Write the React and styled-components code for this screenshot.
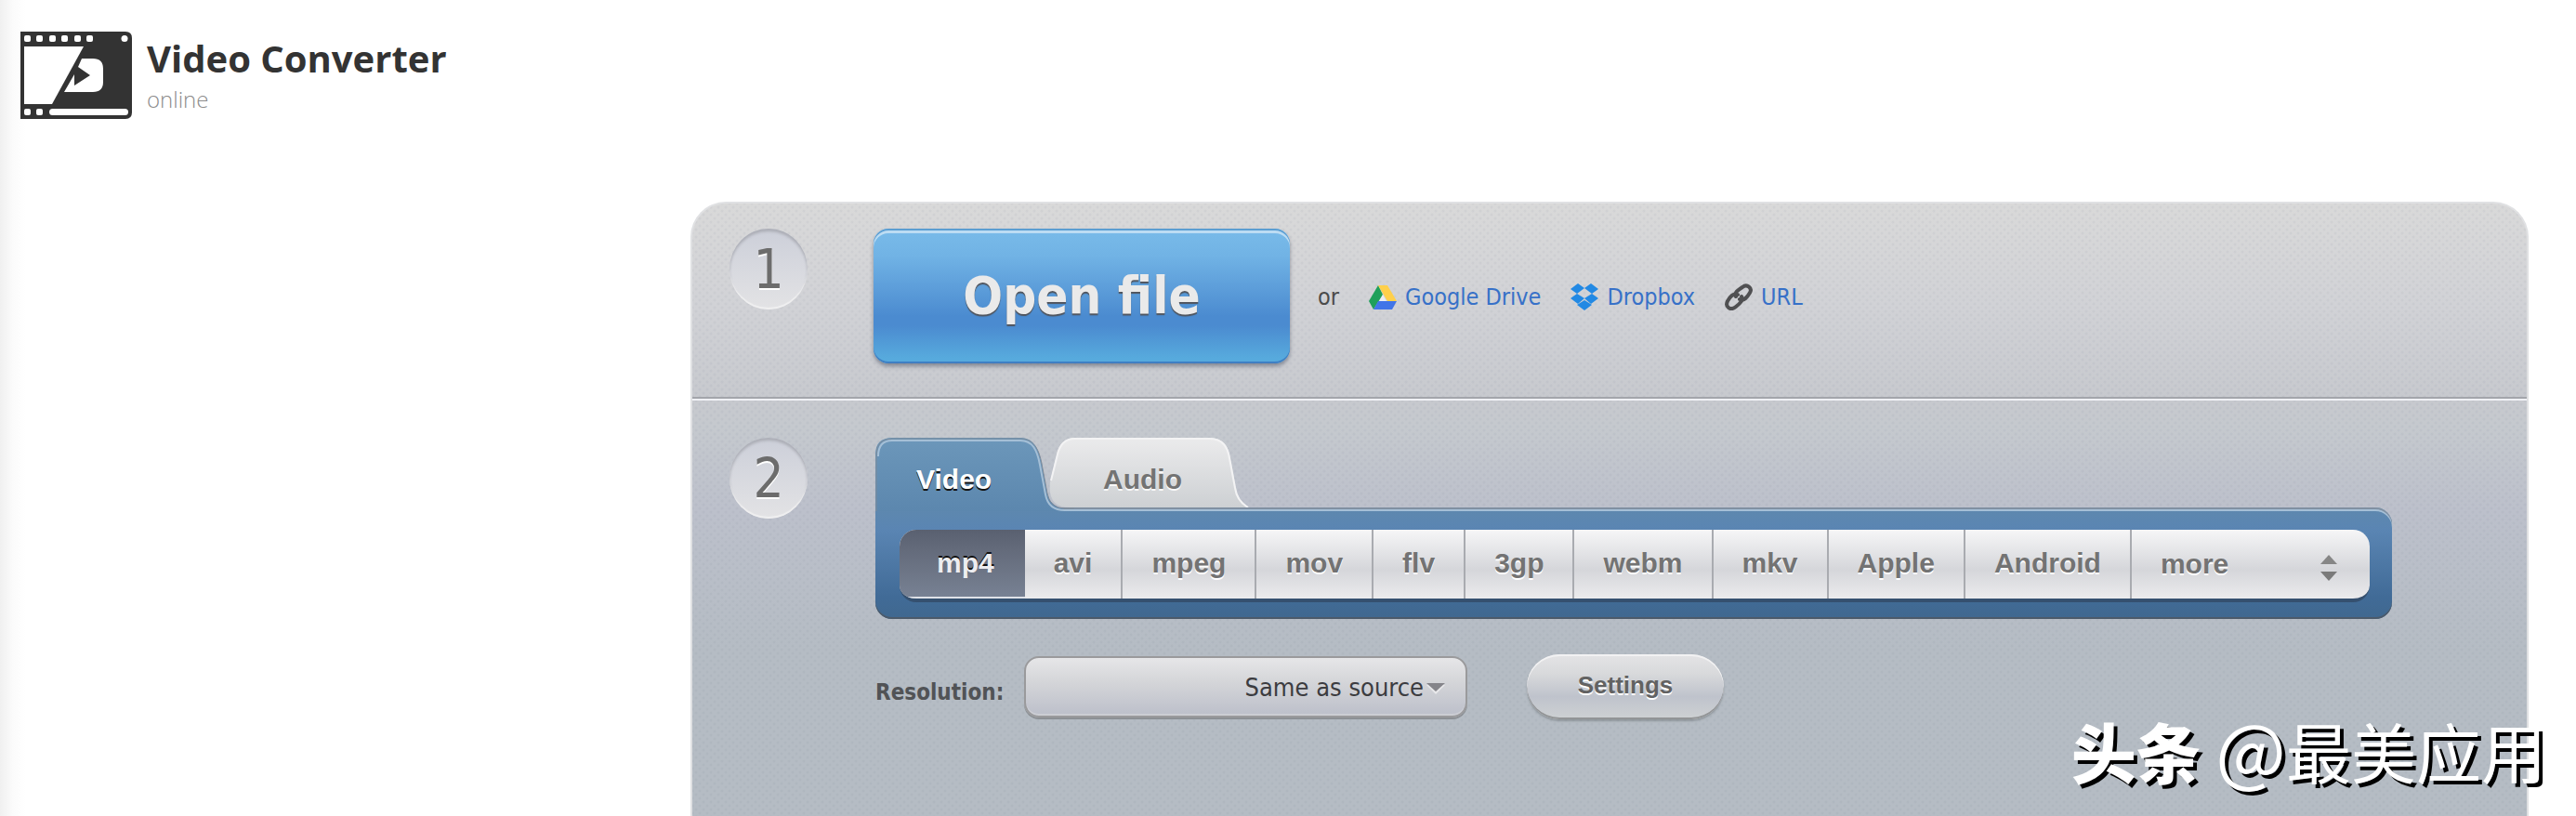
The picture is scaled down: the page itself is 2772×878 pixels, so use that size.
import React, { useState } from "react";
import styled, { createGlobalStyle } from "styled-components";

const formats = ["mp4", "avi", "mpeg", "mov", "flv", "3gp", "webm", "mkv", "Apple", "Android"];

const Logo = () => (
  <svg width="120" height="94" viewBox="0 0 120 94" aria-hidden="true">
    <path d="M0 0H113Q120 0 120 7V87Q120 94 113 94H0Z" fill="#333" />
    <g fill="#fff">
      {[4, 17, 31, 44, 58, 71].map((x) => (
        <rect key={x} x={x} y="4" width="7" height="7" rx="2" />
      ))}
      <circle cx="112" cy="7.5" r="3.5" />
      <path d="M4 16H68L34 78H4Z" />
      <path d="M66 29H78Q89 29 89 40V54Q89 65 78 65H47L58 46V58L75 47L62 38Z" />
      <rect x="4" y="83" width="7" height="7" rx="2" />
      <rect x="17" y="83" width="7" height="7" rx="2" />
      <rect x="31" y="83" width="85" height="7" rx="3.5" />
    </g>
  </svg>
);

const DriveIcon = () => (
  <svg width="30" height="26" viewBox="0 0 30 26" aria-hidden="true">
    <path d="M10 0L0 17L5 26L15 10Z" fill="#1fa05a" />
    <path d="M10 0H20L30 17H20Z" fill="#ffd04b" />
    <path d="M10 17H30L25 26H5Z" fill="#4175e8" />
    <path d="M15 10L11 17H19Z" fill="#eceef2" />
  </svg>
);

const DropboxIcon = () => (
  <svg width="30" height="29" viewBox="0 0 30 29" aria-hidden="true">
    <g fill="#2289e4">
      <path d="M8 0L15 5L7 11L0 6Z" />
      <path d="M22 0L15 5L23 11L30 6Z" />
      <path d="M0 16L7 11L15 16L8 22Z" />
      <path d="M30 16L23 11L15 16L22 22Z" />
      <path d="M15 18L23 23L15 29L7 23Z" />
    </g>
  </svg>
);

const LinkIcon = () => (
  <svg width="30" height="29" viewBox="0 0 30 29" aria-hidden="true">
    <g fill="none" stroke="#505052" strokeWidth="4" strokeLinecap="round">
      <path d="M12 14C10 10 13 8 19 4C24 0 30 5 27 10C24 15 21 19 16 17" />
      <path d="M18 14C20 18 17 21 12 25C6 30 0 25 3 19C6 14 9 10 14 12" />
    </g>
  </svg>
);

const VideoTabShape = () => (
  <svg width="214" height="79" viewBox="0 0 214 79" aria-hidden="true">
    <defs>
      <linearGradient id="videoTab" x1="0" y1="0" x2="0" y2="1">
        <stop offset="0" stopColor="#6c97ba" />
        <stop offset="1" stopColor="#5c87ae" />
      </linearGradient>
    </defs>
    <path d="M0 79V18Q0 0 18 0H156C170 0 176 11 179 28L185 60Q188 74 204 77L214 79Z" fill="url(#videoTab)" />
    <path d="M1 79V18Q1 1 18 1H156C170 1 176 12 179 28L185 60Q188 76 204 76H214" fill="none" stroke="#7f8b99" strokeWidth="1" />
    <path d="M3 20Q3 3 18 3H156C169 3 174 13 177 29L183 61Q186 78 204 78H214" fill="none" stroke="#a5bfd6" strokeWidth="2" />
  </svg>
);

const AudioTabShape = () => (
  <svg width="216" height="75" viewBox="0 0 216 75" aria-hidden="true">
    <defs>
      <linearGradient id="audioTab" x1="0" y1="0" x2="0" y2="1">
        <stop offset="0" stopColor="#ebebec" />
        <stop offset="1" stopColor="#cdd0d3" />
      </linearGradient>
    </defs>
    <path d="M1 48L8 18Q12 0 28 0H172C188 0 193 10 195 22L201 54Q203 68 215 75H22Q-2 75 1 48Z" fill="url(#audioTab)" />
    <path d="M2 46L9 18Q13 1 28 1H172C187 1 192 10 194 22L200 54Q202 68 214 75" fill="none" stroke="#f3f3f4" strokeWidth="2" />
  </svg>
);

const App = () => {
  const [tab, setTab] = useState("Video");
  const [format, setFormat] = useState("mp4");

  return (
    <>
      <GlobalStyle />
      <Page>
        <Header>
          <Logo />
          <div>
            <Title>Video Converter</Title>
            <Subtitle>online</Subtitle>
          </div>
        </Header>
        <Panel>
          <OpenStep>
            <StepNumber>1</StepNumber>
            <OpenButton type="button">Open file</OpenButton>
            <Sources>
              <span>or</span>
              <SourceLink href="#drive">
                <DriveIcon />
                Google Drive
              </SourceLink>
              <SourceLink href="#dropbox">
                <DropboxIcon />
                Dropbox
              </SourceLink>
              <SourceLink href="#url">
                <LinkIcon />
                URL
              </SourceLink>
            </Sources>
          </OpenStep>
          <FormatStep>
            <StepNumber>2</StepNumber>
            <FormatArea>
              <Tabs>
                <VideoTab type="button" onClick={() => setTab("Video")} aria-pressed={tab === "Video"}>
                  <VideoTabShape />
                  <TabText $light>Video</TabText>
                </VideoTab>
                <AudioTab type="button" onClick={() => setTab("Audio")} aria-pressed={tab === "Audio"}>
                  <AudioTabShape />
                  <TabText>Audio</TabText>
                </AudioTab>
              </Tabs>
              <FormatBox>
                <FormatBar>
                  {formats.map((item) => (
                    <FormatButton key={item} type="button" $active={item === format} onClick={() => setFormat(item)}>
                      {item}
                    </FormatButton>
                  ))}
                  <MoreField>
                    <MoreSelect aria-label="More formats">
                      <option>more</option>
                    </MoreSelect>
                    <svg width="20" height="28" viewBox="0 0 20 28" aria-hidden="true">
                      <path d="M10 0L19 10H1Z" fill="#868686" />
                      <path d="M1 18H19L10 28Z" fill="#7a7a7a" />
                    </svg>
                  </MoreField>
                </FormatBar>
              </FormatBox>
              <Options>
                <Label htmlFor="resolution">Resolution:</Label>
                <SelectField>
                  <ResolutionSelect id="resolution">
                    <option>Same as source</option>
                  </ResolutionSelect>
                  <svg width="20" height="12" viewBox="0 0 20 12" aria-hidden="true">
                    <path d="M0 2L10 12L20 2" fill="#e8e8ea" />
                    <path d="M0 0H20L10 9Z" fill="#85858a" />
                  </svg>
                </SelectField>
                <SettingsButton type="button">Settings</SettingsButton>
              </Options>
            </FormatArea>
          </FormatStep>
        </Panel>
        <Watermark>
          <b>头条</b> <span>@</span>最美应用
        </Watermark>
      </Page>
    </>
  );
};

const GlobalStyle = createGlobalStyle`
  * {
    box-sizing: border-box;
  }

  body {
    margin: 0;
    background: #fff;
    font-family: "DejaVu Sans Condensed", "Noto Sans", sans-serif;
  }

  button, select {
    margin: 0;
    padding: 0;
    border: 0;
    background: none;
    cursor: pointer;
  }

  svg {
    display: block;
    flex-shrink: 0;
  }
`;

const Page = styled.div`
  position: relative;
  display: flex;
  flex-direction: column;
  min-height: 100vh;
  background: linear-gradient(to right, #f0f0f0, #fbfbfb 14px, #fff 28px);
`;

const Header = styled.header`
  display: flex;
  gap: 16px;
  height: 217px;
  padding: 34px 22px 0;
  font-family: "Open Sans", sans-serif;
`;

const Title = styled.h1`
  margin: 0;
  color: #333;
  font-size: 40px;
  font-weight: 700;
  line-height: 58px;
`;

const Subtitle = styled.p`
  margin: 0;
  color: #8c8c8c;
  font-size: 24px;
  font-weight: 300;
  line-height: 30px;
`;

const Panel = styled.main`
  flex: 1;
  margin: 0 51px 0 743px;
  border: 2px solid #e0e1e3;
  border-bottom: 0;
  border-radius: 38px 38px 0 0;
  background:
    radial-gradient(circle, rgba(90, 100, 120, 0.06) 1px, transparent 2px) 0 0 / 8px 8px,
    radial-gradient(circle, rgba(90, 100, 120, 0.06) 1px, transparent 2px) 4px 4px / 8px 8px,
    linear-gradient(#d9d9d9, #d1d2d6 110px, #c7c9ce 210px, #c5c9ce 240px, #bcc0cb 330px, #b5bcc4 480px, #b5bcc4);
`;

const Step = styled.section`
  display: flex;
  align-items: flex-start;
  padding-left: 40px;
`;

const OpenStep = styled(Step)`
  height: 212px;
  padding-top: 27px;
  border-bottom: 2px solid #f0f1f5;
  box-shadow: inset 0 -2px #a3a5ab;
`;

const FormatStep = styled(Step)`
  padding-top: 40px;
`;

const StepNumber = styled.div`
  width: 84px;
  height: 87px;
  flex-shrink: 0;
  border-radius: 50%;
  background: linear-gradient(#cccfd9, #e3e3e5);
  box-shadow: inset 0 3px 3px #acaeb6, inset 0 -2px 1px #f0f0f1;
  color: #6c6c6c;
  font-size: 58px;
  line-height: 88px;
  text-align: center;
  text-shadow: 0 2px #fff;
`;

const OpenButton = styled.button`
  width: 448px;
  height: 145px;
  margin-left: 71px;
  padding-bottom: 2px;
  border-radius: 16px;
  background: linear-gradient(#79bbe9, #71b3e5 20%, #4b8bd0 65%, #4b8bd0 72%, #57aadd 96%);
  box-shadow: inset 0 -2px #3f7fc3, inset 0 2px #5b9ed2, inset 0 5px #bcdcf3, 0 3px 4px rgba(60, 70, 90, 0.5);
  color: #eaeaea;
  font-family: inherit;
  font-size: 56px;
  font-weight: 700;
  text-shadow: 0 2px 1px #50545c;
`;

const Sources = styled.div`
  display: flex;
  align-items: center;
  gap: 32px;
  height: 147px;
  padding-left: 30px;
  color: #4b4b4b;
  font-size: 25px;
`;

const SourceLink = styled.a`
  display: flex;
  align-items: center;
  gap: 9px;
  color: #3771c8;
  text-decoration: none;
`;

const FormatArea = styled.div`
  flex: 1;
  margin: 0 145px 0 73px;
`;

const Tabs = styled.div`
  display: flex;
  height: 75px;
`;

const Tab = styled.button`
  position: relative;
  height: 75px;
  flex-shrink: 0;
`;

const VideoTab = styled(Tab)`
  z-index: 2;
  width: 187px;
`;

const AudioTab = styled(Tab)`
  width: 216px;
`;

const TabText = styled.span`
  position: absolute;
  top: 27px;
  left: ${({ $light }) => ($light ? "44px" : "58px")};
  color: ${({ $light }) => ($light ? "#fff" : "#737373")};
  font-family: "Liberation Sans", sans-serif;
  font-size: 30px;
  font-weight: 700;
  line-height: 36px;
  text-shadow: 0 2px ${({ $light }) => ($light ? "#111" : "#f8f8f8")};
`;

const FormatBox = styled.div`
  padding: 24px 24px 18px 26px;
  border-radius: 0 18px 18px 18px;
  background: linear-gradient(#5e88ae, #5a85b3 20%, #416b97 80%, #40688f);
  box-shadow: inset 0 -2px #4c5a6a, inset 0 2px #8090a2, inset 0 4px #a5bfd6;
`;

const FormatBar = styled.div`
  display: flex;
  height: 78px;
  border-bottom: 4px solid #35506f;
  border-radius: 18px;
  background: linear-gradient(#f6f6f7, #d5d6da 58%, #ebebed);
  overflow: hidden;
`;

const FormatButton = styled.button`
  padding: ${({ $active }) => ($active ? "0 33px 2px 40px" : "0 31px 2px")};
  border-right: ${({ $active }) => ($active ? "0" : "2px solid #a9abb0")};
  background: ${({ $active }) => ($active ? "linear-gradient(#596070, #646b7b 30%, #788294)" : "none")};
  box-shadow: ${({ $active }) => ($active ? "inset 0 -2px #dfe2e8" : "none")};
  color: ${({ $active }) => ($active ? "#ededf0" : "#737373")};
  font-family: "Liberation Sans", sans-serif;
  font-size: 30px;
  font-weight: 700;
  line-height: 36px;
  text-shadow: ${({ $active }) => ($active ? "0 -2px #111" : "0 2px #fff")};
`;

const MoreField = styled.div`
  position: relative;
  flex: 1;

  svg {
    position: absolute;
    top: 27px;
    right: 34px;
    pointer-events: none;
  }
`;

const MoreSelect = styled.select`
  width: 100%;
  height: 100%;
  padding: 0 0 2px 31px;
  appearance: none;
  color: #737373;
  font-family: "Liberation Sans", sans-serif;
  font-size: 30px;
  font-weight: 700;
  text-shadow: 0 2px #fff;
`;

const Options = styled.div`
  display: flex;
  align-items: center;
  height: 70px;
  margin-top: 38px;
`;

const Label = styled.label`
  width: 160px;
  padding-top: 12px;
  color: #515356;
  font-size: 24px;
  font-weight: 700;
`;

const SelectField = styled.div`
  position: relative;
  width: 477px;

  svg {
    position: absolute;
    top: 29px;
    right: 24px;
    pointer-events: none;
  }
`;

const ResolutionSelect = styled.select`
  display: block;
  width: 100%;
  height: 66px;
  padding-right: 45px;
  appearance: none;
  border: 2px solid #9a9a9c;
  border-radius: 16px;
  background: linear-gradient(#e6e6e8, #d5d6d9 40%, #bcbfca);
  box-shadow: 0 2px #8c9095, inset 0 -2px #ccced4;
  color: #3c3c40;
  font-family: inherit;
  font-size: 27px;
  text-align: right;
  text-align-last: right;
`;

const SettingsButton = styled.button`
  width: 212px;
  height: 70px;
  margin-left: 64px;
  padding-bottom: 4px;
  border-radius: 35px;
  background: linear-gradient(#e4e4e6, #d8d9db 30%, #bfc3cc 65%, #ced1d3);
  box-shadow: inset 0 2px #f2f2f3, inset 0 -2px #929496, 0 2px 2px rgba(110, 115, 120, 0.5);
  color: #626262;
  font-family: "Liberation Sans", sans-serif;
  font-size: 26px;
  font-weight: 700;
  text-shadow: 0 2px #fff;
`;

/* sits over the lower right corner of the panel */
const Watermark = styled.div`
  position: absolute;
  right: 32px;
  bottom: 20px;
  color: #fff;
  font-family: "Noto Sans CJK SC", sans-serif;
  font-size: 70px;
  line-height: 100px;
  text-shadow: 4px 4px #000;

  b {
    font-weight: 900;
  }

  span {
    font-size: 80px;
  }
`;

export default App;
